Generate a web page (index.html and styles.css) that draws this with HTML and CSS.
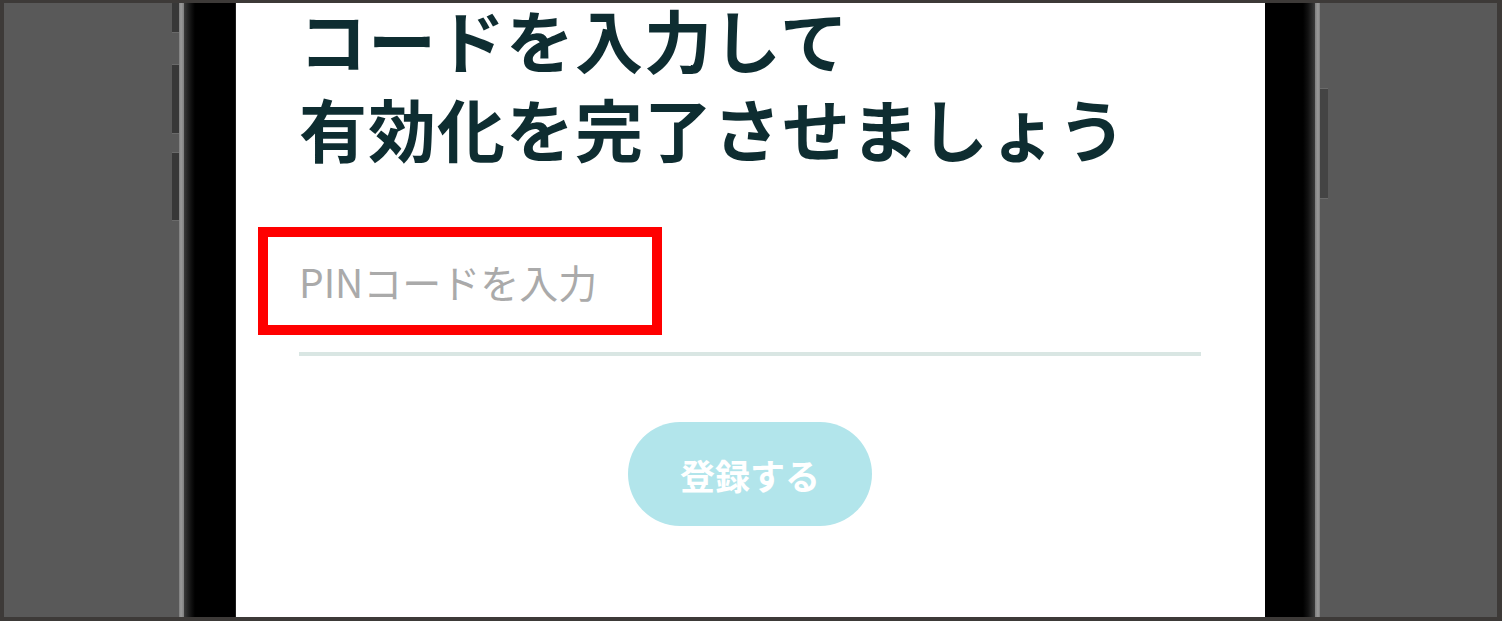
FILE: index.html
```html
<!DOCTYPE html>
<html lang="ja">
<head>
  <meta charset="UTF-8">
  <title>PINコード登録</title>
  <link rel="stylesheet" href="styles.css">
</head>
<body>

<div class="stage">
  <div class="side side-left"></div>

  <div class="phone">
    <span class="key key-1"></span>
    <span class="key key-2"></span>
    <span class="key key-3"></span>
    <span class="key key-power"></span>

    <main class="screen">
      <h1 class="title">コードを入力して<br>有効化を完了させましょう</h1>

      <div class="pin-field">
        <span class="placeholder">PINコードを入力</span>
        <span class="mark"></span>
      </div>

      <div class="actions">
        <button class="btn-submit" disabled>登録する</button>
      </div>
    </main>
  </div>

  <div class="side"></div>
</div>

</body>
</html>
```

FILE: styles.css
```css
html, body {
  margin: 0;
  padding: 0;
}
body {
  background: #3d3a38;
  padding: 3px 5px 4px 4px;
  height: 621px;
  box-sizing: border-box;
  overflow: hidden;
  font-family: "Noto Sans CJK JP", "Noto Sans", sans-serif;
}
.stage {
  display: flex;
  height: 614px;
  background: #595959;
  overflow: hidden;
}
.side {
  flex: 1;
}
.side-left {
  flex: none;
  width: 175px;
}
.phone {
  position: relative;
  width: 1141px;
  display: flex;
  padding: 0 55px 0 56px;
  box-sizing: border-box;
  background: linear-gradient(to right,
    #7e7e7e 0, #9a9a9a 2px, #7e7e7e 5px,
    #3a3a3a 5px, #111 12px, #000 16px,
    #000 calc(100% - 17px), #111 calc(100% - 12px), #3a3a3a calc(100% - 5px),
    #7e7e7e calc(100% - 5px), #9a9a9a calc(100% - 2px), #7e7e7e 100%);
}
.key {
  position: absolute;
  left: -7px;
  width: 7px;
  background: #383838;
  border-top: 1px solid #6a6a6a;
  border-bottom: 1px solid #6a6a6a;
  box-sizing: border-box;
}
.key-1 { top: -4px; height: 34px; }
.key-2 { top: 61px; height: 70px; }
.key-3 { top: 149px; height: 69px; }
.key-power {
  left: auto;
  right: -8px;
  width: 8px;
  top: 85px;
  height: 111px;
  background: #444;
}
.screen {
  flex: 1;
  background: #fff;
  border-left: 1px solid #1c1c1c;
  padding: 0 64px 0 63px;
}
.title {
  margin: -9px 0 0;
  font-size: 68px;
  line-height: 89px;
  font-weight: 700;
  color: #0e2d31;
  letter-spacing: 1px;
}
.pin-field {
  position: relative;
  margin-top: 84px;
  padding-bottom: 46px;
  border-bottom: 4px solid #d9e6e3;
}
.placeholder {
  display: block;
  font-size: 39px;
  line-height: 50px;
  color: #aaaaaa;
}
.mark {
  position: absolute;
  left: -41px;
  top: -29px;
  width: 404px;
  height: 108px;
  border: 10px solid #ff0000;
  box-sizing: border-box;
}
.actions {
  display: flex;
  justify-content: center;
  margin-top: 66px;
}
.btn-submit {
  width: 244px;
  height: 104px;
  border: none;
  border-radius: 52px;
  background: #b2e5eb;
  color: #fff;
  font-family: "Noto Sans CJK JP", sans-serif;
  font-size: 35px;
  font-weight: 700;
}
```
